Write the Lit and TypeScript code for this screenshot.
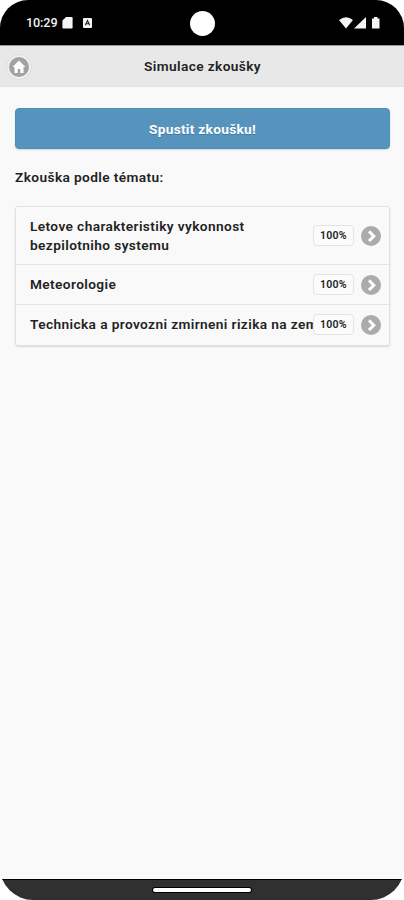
import { LitElement, html, css, svg } from "lit";
import { customElement } from "lit/decorators.js";

interface Topic {
  lines: string[];
  score: string;
}

const topics: Topic[] = [
  { lines: ["Letove charakteristiky vykonnost", "bezpilotniho systemu"], score: "100%" },
  { lines: ["Meteorologie"], score: "100%" },
  { lines: ["Technicka a provozni zmirneni rizika na zemi"], score: "100%" },
];

const chevron = svg`<path d="M8 5.400 L12.800 10.200 L8 15" fill="none" stroke="#fff" stroke-width="3"/>`;

@customElement("app-root")
export class AppRoot extends LitElement {
  static styles = css`
    :host {
      display: block;
      background: #fff;
      font-family: Roboto, "Liberation Sans", sans-serif;
    }
    * { box-sizing: border-box; }
    .phone {
      display: flex;
      flex-direction: column;
      height: 900px;
      overflow: hidden;
      border-radius: 28px 28px 33px 33px;
      background: #f9f9f9;
      color: #222;
      font-size: 13.7px;
      font-weight: 600;
      letter-spacing: 0.39px;
    }
    svg { display: block; flex: none; }
    .status {
      position: relative;
      flex: none;
      height: 45px;
      padding: 0 24px 0 26px;
      display: flex;
      align-items: center;
      background: #000;
      color: #f2f2f2;
    }
    .time { font-size: 12.6px; font-weight: 500; letter-spacing: -0.1px; width: 36px; white-space: nowrap; }
    .spacer { flex: 1; }
    .camera {
      position: absolute;
      left: 190px;
      top: 11px;
      width: 25px;
      height: 25px;
      border-radius: 50%;
      background: #fff;
    }
    .header {
      flex: none;
      height: 42px;
      padding: 0 6px;
      display: grid;
      grid-template-columns: 26px 1fr 26px;
      align-items: center;
      background: #e8e8e8;
      border-top: 1px solid #999;
      border-bottom: 1px solid #e3e3e3;
    }
    .home {
      width: 26px;
      height: 26px;
      margin-top: 2px;
      border-radius: 50%;
      border: 1px solid #dedede;
      background: #f0f0f0;
      display: grid;
      place-items: center;
    }
    .title { text-align: center; padding-left: 1px; white-space: nowrap; }
    .content { flex: 1; padding: 21px 14px 0 15px; }
    .start {
      height: 41px;
      border-radius: 4px;
      border: 1px solid #4b8fbd;
      background: #5694be;
      color: #fff;
      text-align: center;
      line-height: 40px;
      font-weight: 700;
      letter-spacing: 0.28px;
      text-shadow: 0 1px 0 #3a78a5;
      box-shadow: 0 1px 2px rgba(0, 0, 0, 0.14);
    }
    .label { margin-top: 19px; height: 20px; line-height: 19px; }
    .list {
      margin-top: 18px;
      border: 1px solid #e1e1e1;
      border-radius: 3px;
      box-shadow: 0 1px 2px rgba(0, 0, 0, 0.14);
    }
    .row {
      display: flex;
      align-items: center;
      height: 40px;
      padding: 0 8px 0 14px;
    }
    .row + .row { border-top: 1px solid #e4e4e4; }
    .tall { height: 57px; }
    .row:last-child { height: 41px; padding-bottom: 1px; }
    .name {
      flex: 1;
      min-width: 0;
      overflow: hidden;
      white-space: nowrap;
      line-height: 19px;
    }
    .score {
      flex: none;
      width: 41px;
      height: 21px;
      margin-right: 7px;
      border: 1px solid #e4e4e4;
      border-radius: 4px;
      background: #fbfbfb;
      text-align: center;
      line-height: 20px;
      font-size: 10.6px;
      letter-spacing: 0.2px;
    }
    .nav {
      flex: none;
      height: 21px;
      border-top: 1px solid #000;
      background: #303030;
      display: flex;
      justify-content: center;
      align-items: flex-start;
      padding-top: 8px;
    }
    .pill { width: 98px; height: 4px; border-radius: 2px; background: #fff; box-shadow: 0 0 0 1px #000; }
  `;

  render() {
    return html`
      <div class="phone">
        <div class="status">
          <span class="time">10:29</span>
          <svg width="11" height="13" viewBox="0 0 11 13"><path d="M4 1h6q.6 0 .6.8v10q0 .8-.8.8H1.200q-.8 0-.8-.8V4.600Z" fill="#f4f4f4"/></svg>
          <svg width="30" height="13" viewBox="0 0 30 13"><rect x="10" y="2" width="9" height="10" rx="1" fill="#f4f4f4"/><path d="M12.300 9.200 14.500 4.600l2.200 4.600M13.300 7.800h2.400" fill="none" stroke="#222" stroke-width="1.100"/></svg>
          <span class="spacer"></span>
          <svg width="42" height="14" viewBox="0 0 42 14">
            <path d="M1 4Q8 -1.500 15 4L8 12.500Z M28 1v11.500H16Z M34 2.500h2V1h3.500v1.500H41.500v10H34Z" fill="#f4f4f4"/>
          </svg>
          <div class="camera"></div>
        </div>
        <div class="header">
          <div class="home">
            <svg width="20" height="20" viewBox="0 0 20 20"><circle cx="10" cy="10" r="10" fill="#a2a2a2"/><path d="M10 3.500 3.500 10h2v6h3.200v-4h2.600v4h3.200v-6h2Z" fill="#fff"/></svg>
          </div>
          <div class="title">Simulace zkoušky</div>
        </div>
        <div class="content">
          <div class="start">Spustit zkoušku!</div>
          <div class="label">Zkouška podle tématu:</div>
          <div class="list">
            ${topics.map(
              (t) => html`
                <div class="row ${t.lines.length > 1 ? "tall" : ""}">
                  <div class="name">${t.lines.map((l) => html`<div>${l}</div>`)}</div>
                  <div class="score">${t.score}</div>
                  <svg width="20" height="20" viewBox="0 0 20 20"><circle cx="10" cy="10" r="10" fill="#ababab"/>${chevron}</svg>
                </div>
              `
            )}
          </div>
        </div>
        <div class="nav"><div class="pill"></div></div>
      </div>
    `;
  }
}
